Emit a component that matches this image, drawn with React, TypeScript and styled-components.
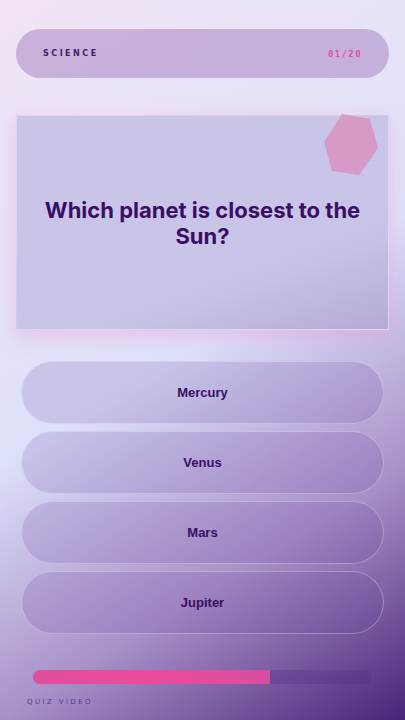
import React from "react";
import styled, { createGlobalStyle } from "styled-components";

const GlobalStyle = createGlobalStyle`
  html, body {
    margin: 0;
    padding: 0;
  }
  body {
    font-family: "Inter", "Liberation Sans", sans-serif;
  }
`;

const options = ["Mercury", "Venus", "Mars", "Jupiter"];
const progress = 70;

const App: React.FC = () => {
  return (
    <>
      <GlobalStyle />
      <Screen>
        <Header>
          <Category>SCIENCE</Category>
          <Counter>01/20</Counter>
        </Header>

        <QuestionCard>
          <Hexagon viewBox="0 0 60 66">
            <polygon points="20,2 48,7 56,36 37,63 10,59 2,30" />
          </Hexagon>
          <QuestionText>Which planet is closest to the Sun?</QuestionText>
        </QuestionCard>

        <OptionList>
          {options.map((o) => (
            <OptionButton key={o}>{o}</OptionButton>
          ))}
        </OptionList>

        <ProgressTrack>
          <ProgressFill style={{ width: `${progress}%` }} />
        </ProgressTrack>

        <Footer>QUIZ VIDEO</Footer>
      </Screen>
    </>
  );
};

export default App;

const Screen = styled.div`
  width: 405px;
  height: 720px;
  box-sizing: border-box;
  padding: 29px 16px 0;
  display: flex;
  flex-direction: column;
  overflow: hidden;
  background: linear-gradient(
    148deg,
    #f1e4f5 0%,
    #e6e3f8 30%,
    #dde0fa 48%,
    #a891c8 74%,
    #4b2379 100%
  );
`;

const Header = styled.div`
  height: 49px;
  border-radius: 25px;
  background: rgba(155, 115, 185, 0.45);
  display: flex;
  align-items: center;
  justify-content: space-between;
  padding: 0 27px;
`;

const Category = styled.span`
  font-family: "DejaVu Sans", sans-serif;
  font-weight: 700;
  font-size: 8px;
  letter-spacing: 2.5px;
  color: #3f1d70;
`;

const Counter = styled.span`
  font-family: "DejaVu Sans Mono", monospace;
  font-weight: 700;
  font-size: 9px;
  letter-spacing: 1.4px;
  color: #e04f9f;
`;

const QuestionCard = styled.div`
  position: relative;
  margin-top: 37px;
  height: 215px;
  box-sizing: border-box;
  background: linear-gradient(160deg, #cbc6e7 0%, #c8c4e8 70%, #b6aad4 100%);
  border: 1px solid rgba(255, 255, 255, 0.35);
  box-shadow: 0 6px 18px rgba(240, 150, 215, 0.45);
  display: flex;
  align-items: center;
  justify-content: center;
  padding: 0 20px;
`;

const Hexagon = styled.svg`
  position: absolute;
  top: -4px;
  right: 6px;
  width: 60px;
  height: 66px;

  polygon {
    fill: #d69ac8;
  }
`;

const QuestionText = styled.h1`
  margin: 0;
  font-family: "Inter", sans-serif;
  font-weight: 700;
  font-size: 22px;
  line-height: 26px;
  text-align: center;
  color: #3a0d66;
`;

const OptionList = styled.div`
  margin-top: 31px;
  padding: 0 5px;
  display: flex;
  flex-direction: column;
  gap: 7px;
`;

const OptionButton = styled.button`
  height: 63px;
  border-radius: 32px;
  border: 1px solid rgba(255, 255, 255, 0.3);
  background: rgba(105, 65, 160, 0.18);
  font-family: "Liberation Sans", Arial, sans-serif;
  font-weight: 700;
  font-size: 13px;
  color: #3a0d66;
  cursor: pointer;
`;

const ProgressTrack = styled.div`
  margin: 36px 17px 0;
  height: 14px;
  border-radius: 7px;
  background: rgba(85, 45, 135, 0.35);
  overflow: hidden;
`;

const ProgressFill = styled.div`
  height: 100%;
  border-radius: 7px 0 0 7px;
  background: linear-gradient(90deg, #df4f9c 0%, #ee4a9b 45%, #d6509f 100%);
`;

const Footer = styled.div`
  margin-top: 14px;
  padding-left: 11px;
  font-family: "DejaVu Sans", sans-serif;
  font-size: 7px;
  letter-spacing: 2.4px;
  color: #4a2d80;
  opacity: 0.85;
`;
